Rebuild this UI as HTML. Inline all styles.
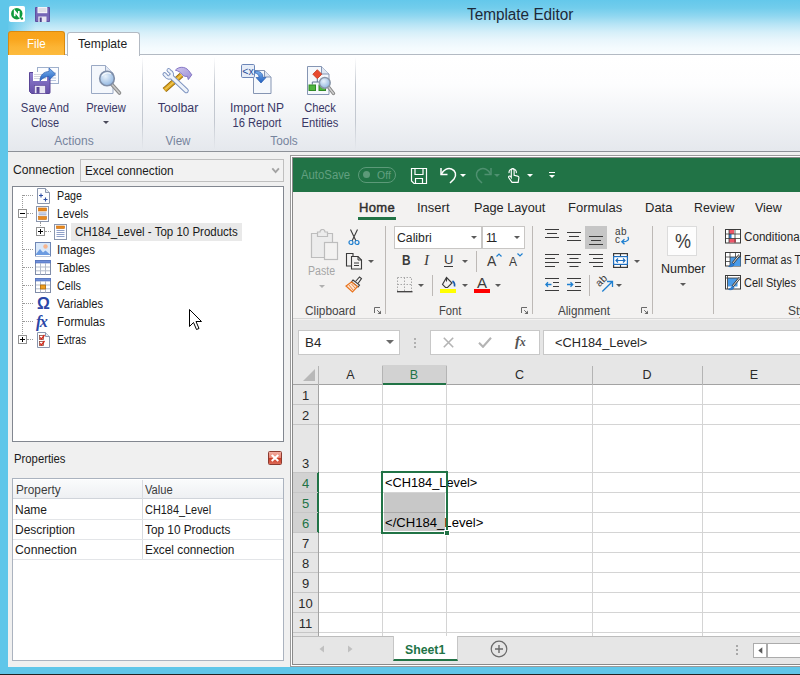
<!DOCTYPE html>
<html><head><meta charset="utf-8">
<style>
*{box-sizing:border-box;margin:0;padding:0}
html,body{width:800px;height:675px;overflow:hidden}
body{position:relative;background:#f0f0f0;font-family:"Liberation Sans",sans-serif;font-size:12px;color:#1e1e1e}
.a{position:absolute}
.t{position:absolute;white-space:nowrap;line-height:1}
.c{text-align:center}
/* window chrome */
#title{left:0;top:0;width:800px;height:55px;background:linear-gradient(#64c8eb 0,#72cdec 8px,#90d7f0 16px,#b6e4f5 24px,#d5eff9 32px,#e9f6fc 40px,#f4fbfe 48px,#f9fdff 55px)}
#lb{left:0;top:0;width:8px;height:675px;background:#5fc6e9}
#bb{left:0;top:667px;width:800px;height:8px;background:#5fc6e9;border-bottom:1px solid #222}
#ribbon{left:8px;top:54px;width:792px;height:98px;background:linear-gradient(#ffffff 0,#fdfdfe 30%,#f1f3f6 65%,#e5e8ed 100%);border-top:1px solid #b3bac3;border-bottom:1px solid #8d9198}
.rsep{width:1px;top:57px;height:93px;background:linear-gradient(rgba(180,186,196,0),#c3c8d0 30%,#c3c8d0 70%,rgba(180,186,196,0))}
.rt{color:#3a3866;font-size:12px}
.rg{color:#76849d;font-size:12px}
/* left panel */
.dd{left:80px;top:159px;width:204px;height:23px;background:#f2f2f2;border:1px solid #bfbfbf}
#tree{left:12px;top:186px;width:272px;height:256px;background:#fff;border:1px solid #828790}
#props{left:12px;top:478px;width:272px;height:183px;background:#fff;border:1px solid #abb3bf}
.ti{font-size:12px;color:#1a1a1a}
/* excel */
#xl{left:290px;top:155px;width:520px;height:512px;background:#fff;border:1px solid #9a9a9a}
#xl2{left:292px;top:157px;width:520px;height:508px;border:1px solid #8a8a8a;background:#fff}
#xgreen{left:293px;top:158px;width:507px;height:34px;background:#217346}
#xrib{left:293px;top:192px;width:507px;height:128px;background:#f3f2f1}
#xfb{left:293px;top:320px;width:507px;height:45px;background:#e6e6e6}
#grid{left:293px;top:365px;width:507px;height:271px;background:#fff}
#tabs{left:293px;top:636px;width:507px;height:28px;background:#e6e6e6;border-top:1px solid #bdbdbd}
.gl{background:#d4d4d4}
.xt{color:#262626;font-size:13px}
.xs{color:#444;font-size:12px}
</style></head><body>
<div class="a" id="title"></div>
<div class="a" style="left:0;top:0;width:40px;height:55px;background:linear-gradient(90deg,#5fc6e9 0,#5fc6e9 7px,rgba(95,198,233,0.600) 16px,rgba(95,198,233,0) 36px)"></div>
<div class="a" id="ribbon"></div>
<div class="a" id="lb"></div>
<div class="a" id="bb"></div>

<!-- TITLE -->
<div class="t" id="ttl" style="left:467px;top:7px;font-size:16px;color:#1c2a3a;transform:scaleX(0.957);transform-origin:0 0">Template Editor</div>
<!-- app icon -->
<svg class="a" style="left:9px;top:6px" width="16" height="16" viewBox="0 0 16 16"><rect width="16" height="16" rx="1.800" fill="#fff"/><circle cx="7.800" cy="7.700" r="5.700" fill="#0d9a3c"/><path d="M5.700 10.300v-5.200l4.100 5.200v-5.200" stroke="#fff" stroke-width="1.700" fill="none"/><circle cx="12.900" cy="12.500" r="1.200" fill="#0d9a3c"/></svg>
<svg class="a" style="left:35px;top:7px" width="15" height="15" viewBox="0 0 15 15"><path d="M0.500 0.500h14v14h-14z" fill="#7566b6" stroke="#5f50a0"/><rect x="2.500" y="0" width="9.800" height="6.200" fill="#f3f3f8"/><path d="M3.500 2h7.800M3.500 4h7.800" stroke="#c0c0cc" stroke-width="0.800"/><rect x="3.300" y="9.500" width="8.200" height="5.500" fill="#e6e4f2"/><rect x="4.700" y="10.500" width="2" height="4.500" fill="#4a3e86"/></svg>

<!-- TABS -->
<div class="a" style="left:8px;top:31px;width:57px;height:24px;border-radius:3px 3px 0 0;background:linear-gradient(#f8a31a 0,#f9a51c 30%,#fcb434 65%,#fdbb3d 100%);border:1px solid #d98a10;border-bottom:none"></div>
<div class="t" id="tf" style="left:27px;top:37px;font-size:13px;color:#fff;transform:scaleX(0.893);transform-origin:0 0">File</div>
<div class="a" style="left:67px;top:32px;width:73px;height:24px;border-radius:3px 3px 0 0;background:#fff;border:1px solid #b3bac3;border-bottom:none"></div>
<div class="t" id="tt" style="left:78px;top:37px;font-size:13px;color:#1e1e1e;transform:scaleX(0.933);transform-origin:0 0">Template</div>

<!-- RIBBON CONTENT -->
<div class="a rsep" style="left:142px"></div>
<div class="a rsep" style="left:214px"></div>
<div class="a rsep" style="left:355px"></div>
<!-- save and close icon -->
<svg class="a" style="left:28px;top:64px" width="34" height="32" viewBox="0 0 34 32">
<defs><linearGradient id="fl" x1="0" y1="0" x2="0" y2="1"><stop offset="0" stop-color="#8f7fd0"/><stop offset="1" stop-color="#6650a8"/></linearGradient>
<linearGradient id="ar" x1="0" y1="0" x2="0" y2="1"><stop offset="0" stop-color="#7fb4ee"/><stop offset="1" stop-color="#1f5fc0"/></linearGradient></defs>
<rect x="9.5" y="3.5" width="21" height="16" fill="#fbfcff" stroke="#9fb0cc"/>
<path d="M20 9h8M20 11.500h8M20 14h8M20 16.500h8" stroke="#b9c6e0" stroke-width="1"/>
<path d="M1.500 8.500h20.500v20a1 1 0 0 1-1 1h-17.500l-2-2z" fill="url(#fl)" stroke="#5a4596"/>
<rect x="5" y="8" width="14" height="9" fill="#fdfdfd"/>
<path d="M6 10.500h12M6 12.500h12M6 14.500h12" stroke="#c9c9d6" stroke-width="0.800"/>
<rect x="6.500" y="21.500" width="11" height="8" fill="#e8e5f3" stroke="#5a4596" stroke-width="0.600"/>
<rect x="8.500" y="23" width="3" height="6.500" fill="#5b4899"/>
<path d="M12 17c0-6 4-9.500 9-9.500v-3.500l6.500 6-6.500 6v-3.500c-3.500 0-6.500 1.500-9 4.500z" fill="url(#ar)" stroke="#2a5db0" stroke-width="0.700"/>
</svg>
<!-- preview icon -->
<svg class="a" style="left:89px;top:63px" width="34" height="34" viewBox="0 0 34 34">
<defs><radialGradient id="gl1" cx="0.4" cy="0.35" r="0.7"><stop offset="0" stop-color="#e8f2fb"/><stop offset="1" stop-color="#8db3e0"/></radialGradient></defs>
<path d="M2.500 2.500h14l7.500 7.500v20.500h-21.500z" fill="#f4f7fc" stroke="#9aa9c4"/>
<path d="M16.500 2.500v7.500h7.500" fill="#dfe6f2" stroke="#9aa9c4"/>
<path d="M22.500 21l8 9" stroke="#8a8a8a" stroke-width="3.600" stroke-linecap="round"/>
<path d="M22.500 21l8 9" stroke="#c9c9c9" stroke-width="1.600" stroke-linecap="round"/>
<circle cx="18" cy="15.500" r="7.300" fill="url(#gl1)" stroke="#7f8ea8" stroke-width="1.600"/>
<path d="M13 13c2-3 6-4 9-2" stroke="#fff" stroke-width="1.200" fill="none" opacity="0.800"/>
</svg>
<!-- toolbar icon -->
<svg class="a" style="left:160px;top:64px" width="36" height="32" viewBox="0 0 36 32">
<defs><linearGradient id="hm" x1="0" y1="0" x2="1" y2="1"><stop offset="0" stop-color="#cfc6ee"/><stop offset="1" stop-color="#9d8fd6"/></linearGradient></defs>
<path d="M4.500 26l17-15" stroke="#8f6208" stroke-width="5.600" stroke-linecap="butt"/>
<path d="M4.500 26l17-15" stroke="#dca622" stroke-width="3.800" stroke-linecap="butt"/>
<path d="M5.300 25.300l16.500-14.500" stroke="#f0c85a" stroke-width="1.200"/>
<path d="M15.400 6.200C18.500 2.400 25 2.200 28.500 6.400L31.800 10.800L28.300 15.600L27.400 12.300C25.500 12.800 23.300 12 22 10.400C20.500 8.200 18 6.800 15.400 6.200Z" fill="url(#hm)" stroke="#7a6cc0" stroke-width="0.900"/>
<path d="M10.800 12.200l15.400 14.400" stroke="#7d93c0" stroke-width="5.200" stroke-linecap="round"/>
<path d="M8.62 6.18L9.96 7.53A3.1 3.1 0 1 1 5.93 11.56L4.58 10.22" fill="none" stroke="#7d93c0" stroke-width="4.200" stroke-linecap="round"/>
<path d="M10.800 12.200l15.400 14.400" stroke="#eef3fa" stroke-width="3.200" stroke-linecap="round"/>
<path d="M8.62 6.18L9.96 7.53A3.1 3.1 0 1 1 5.93 11.56L4.58 10.22" fill="none" stroke="#eef3fa" stroke-width="2.300" stroke-linecap="round"/>
</svg>
<!-- import np icon -->
<svg class="a" style="left:239px;top:62px" width="36" height="34" viewBox="0 0 36 34">
<path d="M14.500 8.500h11l6.500 6.500v16.500h-17.500z" fill="#f5f8fc" stroke="#8595b3"/>
<path d="M25.500 8.500v6.500h6.500" fill="#dfe6f2" stroke="#8595b3"/>
<rect x="2.500" y="2.500" width="13" height="13" rx="1.200" fill="#e6edf8" stroke="#6c86b8"/>
<text x="9" y="13" font-family="Liberation Sans" font-size="10.500" fill="#2d4f9a" text-anchor="middle">&lt;x</text>
<path d="M16 9c5.500 0 8 2.500 8 6.500h3l-5 5.500-5-5.500h3c0-2.500-1.200-4-4-4.500z" fill="url(#ar)" stroke="#2a5db0" stroke-width="0.700"/>
</svg>
<!-- check entities icon -->
<svg class="a" style="left:305px;top:64px" width="32" height="34" viewBox="0 0 32 34">
<path d="M2.500 2.500h14l7.500 7.500v20.500h-21.500z" fill="#f5f8fc" stroke="#8595b3"/>
<path d="M16.500 2.500v7.500h7.500" fill="#dfe6f2" stroke="#8595b3"/>
<path d="M12.300 14.500v3.500M7.300 20.500v-2.500h10v2.500" stroke="#5f7390" fill="none"/>
<path d="M12.300 5.700l4.500 4.500-4.500 4.500-4.500-4.500z" fill="#e8492e" stroke="#c03a20" stroke-width="0.800"/>
<rect x="4" y="21" width="6.500" height="5.500" fill="#4fb53f" stroke="#2f8a25"/>
<rect x="14" y="21" width="6.500" height="5.500" fill="#4fb53f" stroke="#2f8a25"/>
<path d="M23.500 23l5 6.500" stroke="#858585" stroke-width="3.400" stroke-linecap="round"/>
<path d="M23.500 23l5 6.500" stroke="#cfcfcf" stroke-width="1.400" stroke-linecap="round"/>
<circle cx="19.800" cy="18.800" r="5.400" fill="url(#gl1)" stroke="#8a96a8" stroke-width="1.500"/>
</svg>
<div class="t c rt" id="r1" style="left:5px;width:80px;top:102px;transform:scaleX(0.940);transform-origin:50% 0">Save And</div>
<div class="t c rt" id="r2" style="left:5px;width:80px;top:117px;transform:scaleX(0.913);transform-origin:50% 0">Close</div>
<div class="t c rt" id="r3" style="left:66px;width:80px;top:102px;transform:scaleX(0.930);transform-origin:50% 0">Preview</div>
<div class="a" style="left:103px;top:121px;width:0;height:0;border:3px solid transparent;border-top:3px solid #4a4a5a;border-bottom:none"></div>
<div class="t c rt" id="r4" style="left:138px;width:80px;top:102px;transform:scaleX(1.029);transform-origin:50% 0">Toolbar</div>
<div class="t c rt" id="r5" style="left:217px;width:80px;top:102px">Import NP</div>
<div class="t c rt" id="r6" style="left:217px;width:80px;top:117px;transform:scaleX(0.929);transform-origin:50% 0">16 Report</div>
<div class="t c rt" id="r7" style="left:280px;width:80px;top:102px;transform:scaleX(0.925);transform-origin:50% 0">Check</div>
<div class="t c rt" id="r8" style="left:280px;width:80px;top:117px;transform:scaleX(0.935);transform-origin:50% 0">Entities</div>
<div class="t c rg" id="g1" style="left:34px;width:80px;top:135px">Actions</div>
<div class="t c rg" id="g2" style="left:138px;width:80px;top:135px;transform:scaleX(0.968);transform-origin:50% 0">View</div>
<div class="t c rg" id="g3" style="left:244px;width:80px;top:135px;transform:scaleX(0.982);transform-origin:50% 0">Tools</div>

<!-- LEFT PANEL -->
<div class="t ti" id="lc" style="left:13px;top:164px;transform:scaleX(1.013);transform-origin:0 0">Connection</div>
<div class="a dd"></div>
<div class="t ti" id="ld" style="left:85px;top:165px;transform:scaleX(0.977);transform-origin:0 0">Excel connection</div>
<svg class="a" style="left:271px;top:167px" width="9" height="7" viewBox="0 0 9 7"><path d="M1.300 1.300l3.300 3.900 3.300-3.900" stroke="#a3a3a3" stroke-width="1.800" fill="none"/></svg>
<div class="a" id="tree"></div>
<!-- tree lines -->
<div class="a" style="left:22px;top:195px;width:1px;height:145px;border-left:1px dotted #9a9a9a"></div>
<div class="a" style="left:23px;top:195px;width:10px;height:1px;border-top:1px dotted #9a9a9a"></div>
<div class="a" style="left:27px;top:213px;width:6px;height:1px;border-top:1px dotted #9a9a9a"></div>
<div class="a" style="left:23px;top:249px;width:10px;height:1px;border-top:1px dotted #9a9a9a"></div>
<div class="a" style="left:23px;top:267px;width:10px;height:1px;border-top:1px dotted #9a9a9a"></div>
<div class="a" style="left:23px;top:285px;width:10px;height:1px;border-top:1px dotted #9a9a9a"></div>
<div class="a" style="left:23px;top:303px;width:10px;height:1px;border-top:1px dotted #9a9a9a"></div>
<div class="a" style="left:23px;top:321px;width:10px;height:1px;border-top:1px dotted #9a9a9a"></div>
<div class="a" style="left:27px;top:339px;width:6px;height:1px;border-top:1px dotted #9a9a9a"></div>
<div class="a" style="left:40px;top:222px;width:1px;height:6px;border-left:1px dotted #9a9a9a"></div>
<div class="a" style="left:45px;top:231px;width:6px;height:1px;border-top:1px dotted #9a9a9a"></div>
<!-- expand boxes -->
<div class="a" style="left:18px;top:209px;width:9px;height:9px;background:#fff;border:1px solid #919191"></div><div class="a" style="left:20px;top:213px;width:5px;height:1px;background:#000"></div>
<div class="a" style="left:36px;top:227px;width:9px;height:9px;background:#fff;border:1px solid #919191"></div><div class="a" style="left:38px;top:231px;width:5px;height:1px;background:#000"></div><div class="a" style="left:40px;top:229px;width:1px;height:5px;background:#000"></div>
<div class="a" style="left:18px;top:335px;width:9px;height:9px;background:#fff;border:1px solid #919191"></div><div class="a" style="left:20px;top:339px;width:5px;height:1px;background:#000"></div><div class="a" style="left:22px;top:337px;width:1px;height:5px;background:#000"></div>
<!-- selected -->
<div class="a" style="left:71px;top:223px;width:171px;height:18px;background:#e9e9e9"></div>
<!-- tree icons -->
<svg class="a" style="left:36px;top:188px" width="15" height="16" viewBox="0 0 15 16"><path d="M1.500 0.500h8l4 4v11h-12z" fill="#fcfdff" stroke="#8a96ad"/><path d="M9.500 0.500v4h4" fill="#e4e9f2" stroke="#8a96ad"/><path d="M3 7.500h4M5 5.500v4M7.500 11.500h4M9.500 9.500v4" stroke="#2d4ea3" stroke-width="1.100"/></svg>
<svg class="a" style="left:36px;top:206px" width="14" height="16" viewBox="0 0 14 16"><rect x="0.500" y="0.500" width="12" height="15" fill="#fdfdff" stroke="#8a96ad"/><rect x="2.500" y="2" width="8" height="3" fill="#e88a1e" stroke="#c76a0a" stroke-width="0.600"/><rect x="2.500" y="10.500" width="8" height="3" fill="#e88a1e" stroke="#c76a0a" stroke-width="0.600"/><path d="M2.500 7h8M2.500 8.800h8" stroke="#8fa0c8" stroke-width="1"/></svg>
<svg class="a" style="left:54px;top:224px" width="14" height="16" viewBox="0 0 14 16"><rect x="0.500" y="0.500" width="12" height="15" fill="#fdfdff" stroke="#8a96ad"/><rect x="2.500" y="2" width="8" height="2.500" fill="#e88a1e" stroke="#c76a0a" stroke-width="0.600"/><path d="M2.500 6.500h8M2.500 8.500h8M2.500 10.500h8M2.500 12.500h8" stroke="#8fa0c8" stroke-width="1"/></svg>
<svg class="a" style="left:35px;top:242px" width="16" height="15" viewBox="0 0 16 15"><rect x="0.500" y="0.500" width="15" height="13.500" fill="#d9e8fa" stroke="#6f86b4"/><circle cx="10.500" cy="4.500" r="2.200" fill="#f6b58e"/><path d="M1 12l4-5 3 3.500 2.500-2 4.500 4v1h-14z" fill="#6c9be0"/><path d="M1 13.500h14" stroke="#fff"/></svg>
<svg class="a" style="left:35px;top:260px" width="16" height="15" viewBox="0 0 16 15"><rect x="0.500" y="0.500" width="15" height="14" fill="#fff" stroke="#7f8ca8"/><rect x="0.500" y="0.500" width="15" height="2.500" fill="#6f8fd8" stroke="#4a6bc0" stroke-width="0.600"/><path d="M5.500 3v11.500M10.500 3v11.500M1 7h14M1 10.800h14" stroke="#b4bccb" stroke-width="1"/></svg>
<svg class="a" style="left:35px;top:278px" width="16" height="15" viewBox="0 0 16 15"><rect x="0.500" y="0.500" width="15" height="14" fill="#fff" stroke="#7f8ca8"/><rect x="0.500" y="0.500" width="15" height="2.500" fill="#6f8fd8" stroke="#4a6bc0" stroke-width="0.600"/><path d="M5.500 3v11.500M10.500 3v11.500M1 7h14M1 10.800h14" stroke="#b4bccb" stroke-width="1"/><rect x="5.500" y="7" width="5" height="4" fill="#f0a020" stroke="#b06a08" stroke-width="0.800"/></svg>
<div class="t" style="left:37px;top:296px;font-size:16px;font-weight:bold;color:#2b46a6;font-family:'Liberation Sans'">&#937;</div>
<div class="t" style="left:36px;top:314px;font-size:16px;font-style:italic;font-weight:bold;color:#2b46a6;font-family:'Liberation Serif';letter-spacing:-1.500px">fx</div>
<svg class="a" style="left:36px;top:332px" width="15" height="16" viewBox="0 0 15 16"><path d="M1.500 0.500h8l4 4v11h-12z" fill="#fcfdff" stroke="#8a96ad"/><path d="M9.500 0.500v4h4" fill="#e4e9f2" stroke="#8a96ad"/><rect x="3.500" y="3.500" width="4" height="4" fill="#fff" stroke="#8a4a3a" stroke-width="0.800"/><rect x="3.500" y="9.500" width="4" height="4" fill="#fff" stroke="#8a4a3a" stroke-width="0.800"/><path d="M4 5.500l1.500 1.500 3-4M4 11.500l1.500 1.500 3-4" stroke="#d8281a" stroke-width="1.300" fill="none"/></svg>
<!-- tree text -->
<div class="t ti" id="t1" style="left:57px;top:190px;transform:scaleX(0.892);transform-origin:0 0">Page</div>
<div class="t ti" id="t2" style="left:57px;top:208px;transform:scaleX(0.902);transform-origin:0 0">Levels</div>
<div class="t ti" id="t3" style="left:75px;top:226px;transform:scaleX(0.958);transform-origin:0 0">CH184_Level - Top 10 Products</div>
<div class="t ti" id="t4" style="left:57px;top:244px;transform:scaleX(0.965);transform-origin:0 0">Images</div>
<div class="t ti" id="t5" style="left:57px;top:262px;transform:scaleX(0.951);transform-origin:0 0">Tables</div>
<div class="t ti" id="t6" style="left:57px;top:280px;transform:scaleX(0.900);transform-origin:0 0">Cells</div>
<div class="t ti" id="t7" style="left:57px;top:298px;transform:scaleX(0.936);transform-origin:0 0">Variables</div>
<div class="t ti" id="t8" style="left:57px;top:316px;transform:scaleX(0.960);transform-origin:0 0">Formulas</div>
<div class="t ti" id="t9" style="left:57px;top:334px;transform:scaleX(0.853);transform-origin:0 0">Extras</div>
<!-- cursor -->
<svg class="a" style="left:188px;top:308px" width="14" height="23" viewBox="0 0 14 23"><path d="M1.500 1.500v17l4-4 3 7 2.500-1-3-7h5.500z" fill="#fff" stroke="#000" stroke-width="1"/></svg>
<!-- properties -->
<div class="t ti" id="pp" style="left:14px;top:453px;transform:scaleX(0.942);transform-origin:0 0">Properties</div>
<div class="a" style="left:268px;top:451px;width:14px;height:14px;border-radius:1.500px;background:linear-gradient(#f3ada0 0,#e88474 48%,#cc3a22 52%,#dc6a58 100%);border:1px solid #8c3b30"></div>
<svg class="a" style="left:268px;top:451px" width="14" height="14" viewBox="0 0 14 14"><path d="M3.700 4l6.600 6M10.300 4l-6.600 6" stroke="#fff" stroke-width="2"/></svg>
<div class="a" id="props"></div>
<div class="a" style="left:13px;top:480px;width:270px;height:19px;background:linear-gradient(#fafbfc,#eef0f3);border-bottom:1px solid #d0d4da"></div>
<div class="a" style="left:142px;top:480px;width:1px;height:80px;background:#d9dce1"></div>
<div class="a" style="left:13px;top:519px;width:270px;height:1px;background:#e3e5e8"></div>
<div class="a" style="left:13px;top:539px;width:270px;height:1px;background:#e3e5e8"></div>
<div class="a" style="left:13px;top:559px;width:270px;height:1px;background:#e3e5e8"></div>
<div class="t ti" id="p1" style="left:16px;top:484px;color:#3c3c3c;transform:scaleX(0.983);transform-origin:0 0">Property</div>
<div class="t ti" id="p2" style="left:145px;top:484px;color:#3c3c3c;transform:scaleX(0.929);transform-origin:0 0">Value</div>
<div class="t ti" id="p3" style="left:15px;top:504px">Name</div>
<div class="t ti" id="p4" style="left:145px;top:504px;transform:scaleX(0.909);transform-origin:0 0">CH184_Level</div>
<div class="t ti" id="p5" style="left:15px;top:524px">Description</div>
<div class="t ti" id="p6" style="left:145px;top:524px;transform:scaleX(0.984);transform-origin:0 0">Top 10 Products</div>
<div class="t ti" id="p7" style="left:15px;top:544px;transform:scaleX(1.019);transform-origin:0 0">Connection</div>
<div class="t ti" id="p8" style="left:145px;top:544px;transform:scaleX(0.986);transform-origin:0 0">Excel connection</div>

<!-- EXCEL FRAME -->
<div class="a" id="xl"></div>
<div class="a" id="xl2"></div>
<div class="a" id="xgreen"></div>
<div class="a" id="xrib"></div>
<div class="a" id="xfb"></div>
<div class="a" id="grid"></div>
<div class="a" id="tabs"></div>
<!-- green bar -->
<div class="t" id="x0" style="left:301px;top:169px;font-size:12px;color:#62a080;transform:scaleX(0.945);transform-origin:0 0">AutoSave</div>
<div class="a" style="left:358px;top:166.500px;width:38px;height:16px;border:1px solid #5c9a79;border-radius:8px"></div>
<div class="a" style="left:363px;top:171px;width:7px;height:7px;border-radius:4px;background:#5c9a79"></div>
<div class="t" style="left:377px;top:170px;font-size:10.500px;color:#62a080">Off</div>
<svg class="a" style="left:410px;top:167px" width="18" height="18" viewBox="0 0 18 18"><path d="M1.500 1.500h15v15h-12.500l-2.500-2.500z" fill="none" stroke="#fff" stroke-width="1.200"/><path d="M5 1.500v6h8v-6M5.500 16.500v-5h7v5" fill="none" stroke="#fff" stroke-width="1.200"/></svg>
<svg class="a" style="left:439px;top:165px" width="20" height="20" viewBox="0 0 20 20"><path d="M2 3v6.500h6.500" fill="none" stroke="#fff" stroke-width="1.500"/><path d="M2.500 9c2-4 6-6.500 10-5s5.500 6 2.500 10l-4 4" fill="none" stroke="#fff" stroke-width="1.500"/></svg>
<div class="a" style="left:460px;top:174px;border:3px solid transparent;border-top:3px solid #fff;border-bottom:none"></div>
<svg class="a" style="left:474px;top:165px" width="20" height="20" viewBox="0 0 20 20"><path d="M17 3v6.500h-6.500" fill="none" stroke="#4f9070" stroke-width="1.500"/><path d="M16.500 9c-2-4-6-6.500-10-5s-5.500 6-2.500 10l4 4" fill="none" stroke="#4f9070" stroke-width="1.500"/></svg>
<div class="a" style="left:494px;top:174px;border:3px solid transparent;border-top:3px solid #4f9070;border-bottom:none"></div>
<svg class="a" style="left:506px;top:167px" width="15" height="18.500" viewBox="0 0 17 21"><path d="M6 12v-8.500a1.600 1.600 0 0 1 3.200 0v6l4 0.800a1.800 1.800 0 0 1 1.400 2l-0.800 5.200h-7l-3.800-5.500a1.300 1.300 0 0 1 2-1.500z" fill="none" stroke="#fff" stroke-width="1.300"/><path d="M3.500 7a4.200 4.200 0 1 1 8.200 0" fill="none" stroke="#fff" stroke-width="1.200"/></svg>
<div class="a" style="left:527px;top:174px;border:3px solid transparent;border-top:3px solid #fff;border-bottom:none"></div>
<div class="a" style="left:549px;top:172px;width:6px;height:1px;background:#fff"></div>
<div class="a" style="left:549px;top:175px;border:3px solid transparent;border-top:3px solid #fff;border-bottom:none"></div>
<!-- tabs -->
<div class="t" id="xh1" style="left:359px;top:201px;font-size:13px;color:#2f2f2f;-webkit-text-stroke:0.450px #2f2f2f;letter-spacing:0.350px">Home</div>
<div class="a" style="left:358px;top:217px;width:38px;height:3px;background:#217346"></div>
<div class="t xt" id="xh2" style="left:417px;top:201px;font-size:13px">Insert</div>
<div class="t xt" id="xh3" style="left:474px;top:201px;font-size:13px;transform:scaleX(0.977);transform-origin:0 0">Page Layout</div>
<div class="t xt" id="xh4" style="left:568px;top:201px;font-size:13px">Formulas</div>
<div class="t xt" id="xh5" style="left:645px;top:201px;font-size:13px">Data</div>
<div class="t xt" id="xh6" style="left:694px;top:201px;font-size:13px;transform:scaleX(0.947);transform-origin:0 0">Review</div>
<div class="t xt" id="xh7" style="left:755px;top:201px;font-size:13px;transform:scaleX(0.960);transform-origin:0 0">View</div>
<!-- EXCEL RIBBON -->
<div class="a" style="left:385px;top:226px;width:1px;height:88px;background:#bdb9b6"></div><div class="a" style="left:532px;top:226px;width:1px;height:88px;background:#bdb9b6"></div><div class="a" style="left:652px;top:226px;width:1px;height:88px;background:#bdb9b6"></div><div class="a" style="left:713px;top:226px;width:1px;height:88px;background:#bdb9b6"></div><div class="a" style="left:476px;top:251px;width:1px;height:21px;background:#bdb9b6"></div><div class="a" style="left:432px;top:275px;width:1px;height:21px;background:#bdb9b6"></div><div class="a" style="left:589px;top:275px;width:1px;height:21px;background:#bdb9b6"></div><svg class="a" style="left:310px;top:229px" width="29" height="32" viewBox="0 0 29 32"><path d="M1.500 4.500h6v-1.500h2.500a2.500 2.500 0 0 1 5 0h2.500v1.500h5v24h-21z" fill="#ececec" stroke="#bdbdbd" stroke-width="1.200"/><path d="M7.500 4.500v3h10v-3" fill="none" stroke="#bdbdbd" stroke-width="1.200"/><rect x="14.500" y="13.500" width="13" height="17" fill="#f3f2f1" stroke="#bdbdbd" stroke-width="1.200"/></svg>
<div class="t" id="xp" style="left:308px;top:265px;font-size:12px;color:#a6a6a6;transform:scaleX(0.880);transform-origin:0 0">Paste</div>
<div class="a" style="left:319px;top:285px;border:3px solid transparent;border-top:3px solid #b0b0b0;border-bottom:none"></div><svg class="a" style="left:347px;top:229px" width="14" height="17" viewBox="0 0 14 17"><path d="M3.500 0.500l5.500 11.500M10.500 0.500l-5.500 11.500" stroke="#3b3b3b" stroke-width="1.100" fill="none"/><circle cx="4" cy="13.500" r="2" fill="none" stroke="#1e7fd0" stroke-width="1.200"/><circle cx="10" cy="13.500" r="2" fill="none" stroke="#1e7fd0" stroke-width="1.200"/></svg>
<svg class="a" style="left:345px;top:252px" width="19" height="18" viewBox="0 0 19 18"><path d="M1.500 1.500h6.500v12.500h-6.500z" fill="#f3f2f1" stroke="#3b3b3b" stroke-width="1.100"/><path d="M6.500 4.500h6.500l3.500 3.500v9h-10z" fill="#f3f2f1" stroke="#3b3b3b" stroke-width="1.100"/><path d="M13 4.500v3.500h3.500M9 11h5M9 13.500h5" fill="none" stroke="#3b3b3b" stroke-width="1"/></svg>
<div class="a" style="left:368px;top:260px;border:3px solid transparent;border-top:3px solid #5a5a5a;border-bottom:none"></div><svg class="a" style="left:345px;top:276px" width="18" height="17" viewBox="0 0 18 17"><path d="M10.500 5.500l4-4.500 2 1.500-3.500 5" fill="#f3f2f1" stroke="#3b3b3b" stroke-width="1.100"/><path d="M8 4l6.500 5-1.500 2-6.500-5z" fill="#f3f2f1" stroke="#3b3b3b" stroke-width="1.100"/><path d="M6.500 6l6 4.500-5 5.500-6.500-6z" fill="#fbe3d0" stroke="#e8741e" stroke-width="1.200"/><path d="M4 9l4 5M6.500 8l3.500 4" stroke="#e8741e" stroke-width="0.800"/></svg>
<div class="t xs" id="xl1" style="left:305px;top:305px;font-size:12px;transform:scaleX(0.986);transform-origin:0 0">Clipboard</div>
<svg class="a" style="left:374px;top:307px" width="8" height="8" viewBox="0 0 8 8"><path d="M0.500 6v-5.500h5.500" fill="none" stroke="#6a6a6a" stroke-width="1"/><path d="M3.200 3.200l3 3" stroke="#6a6a6a" stroke-width="1"/><path d="M7 3.500v3.500h-3.500z" fill="#6a6a6a"/></svg><div class="a" style="left:394px;top:226px;width:88px;height:23px;background:#fff;border:1px solid #c8c6c4"></div>
<div class="a" style="left:482px;top:226px;width:43px;height:23px;background:#fff;border:1px solid #c8c6c4"></div>
<div class="t xt" id="xf1" style="left:397px;top:232px;font-size:12px;transform:scaleX(1.020);transform-origin:0 0">Calibri</div>
<div class="t xt" id="xf2" style="left:486px;top:232px;font-size:12px;letter-spacing:-1.300px">11</div>
<div class="a" style="left:471px;top:236px;border:3px solid transparent;border-top:3px solid #5a5a5a;border-bottom:none"></div><div class="a" style="left:514px;top:236px;border:3px solid transparent;border-top:3px solid #5a5a5a;border-bottom:none"></div><div class="t" style="left:402px;top:253px;font-size:14px;font-weight:bold;color:#3b3b3b;transform:scaleX(0.850);transform-origin:0 0">B</div>
<div class="t" style="left:424px;top:253px;font-size:15px;font-style:italic;color:#3b3b3b;font-family:'Liberation Serif'">I</div>
<div class="t" style="left:444px;top:253px;font-size:13px;color:#3b3b3b;border-bottom:1px solid #3b3b3b;padding-bottom:0px;line-height:13px">U</div>
<div class="a" style="left:462px;top:260px;border:3px solid transparent;border-top:3px solid #5a5a5a;border-bottom:none"></div><div class="t" style="left:487px;top:254px;font-size:14px;color:#3b3b3b">A</div>
<svg class="a" style="left:496px;top:253px" width="6" height="4" viewBox="0 0 6 4"><path d="M0.500 3.500l2.500-2.500 2.500 2.500" fill="none" stroke="#1e7fd0" stroke-width="1.200"/></svg>
<div class="t" style="left:509px;top:256px;font-size:12px;color:#3b3b3b">A</div>
<svg class="a" style="left:517px;top:253px" width="6" height="4" viewBox="0 0 6 4"><path d="M0.500 0.500l2.500 2.500 2.500-2.500" fill="none" stroke="#1e7fd0" stroke-width="1.200"/></svg>
<svg class="a" style="left:397px;top:277px" width="16" height="16" viewBox="0 0 16 16"><path d="M0.500 0.500h14v14M0.500 0.500v14M7.500 0.500v14M0.500 7.500h14" fill="none" stroke="#a8a8a8" stroke-width="1" stroke-dasharray="1.500 1.500"/><path d="M0 14.700h15.500" stroke="#3b3b3b" stroke-width="1.300"/></svg>
<div class="a" style="left:418px;top:284px;border:3px solid transparent;border-top:3px solid #5a5a5a;border-bottom:none"></div><svg class="a" style="left:441px;top:276px" width="16" height="13" viewBox="0 0 16 13"><path d="M5.500 1.500l5.500 5.500-4.500 4.500h-2l-3-3z" fill="#f3f2f1" stroke="#3b3b3b" stroke-width="1.100"/><path d="M5.500 1.500v4" stroke="#3b3b3b" stroke-width="1.100"/><path d="M11.500 5c1.500 1 2.500 3 2 5.500" fill="none" stroke="#1e5fb0" stroke-width="1.600"/></svg>
<div class="a" style="left:440px;top:289px;width:16px;height:4px;background:#ffff00"></div>
<div class="a" style="left:462px;top:284px;border:3px solid transparent;border-top:3px solid #5a5a5a;border-bottom:none"></div><div class="t" style="left:477px;top:275px;font-size:15px;color:#3b3b3b">A</div>
<div class="a" style="left:474px;top:289px;width:16px;height:4px;background:#fe0000"></div>
<div class="a" style="left:495px;top:284px;border:3px solid transparent;border-top:3px solid #5a5a5a;border-bottom:none"></div><div class="t xs" id="xl2t" style="left:439px;top:305px;font-size:12px;transform:scaleX(0.932);transform-origin:0 0">Font</div>
<svg class="a" style="left:521px;top:307px" width="8" height="8" viewBox="0 0 8 8"><path d="M0.500 6v-5.500h5.500" fill="none" stroke="#6a6a6a" stroke-width="1"/><path d="M3.200 3.200l3 3" stroke="#6a6a6a" stroke-width="1"/><path d="M7 3.500v3.500h-3.500z" fill="#6a6a6a"/></svg><div class="a" style="left:585px;top:226px;width:22px;height:23px;background:#c6c6c6"></div>
<svg class="a" style="left:545px;top:229px" width="14" height="9" viewBox="0 0 14 9"><path d="M0 0.5h14M2 4.5h10M0 8.5h14" stroke="#3b3b3b" stroke-width="1.200"/></svg><svg class="a" style="left:567px;top:232px" width="14" height="9" viewBox="0 0 14 9"><path d="M0 0.5h14M2 4.5h10M0 8.5h14" stroke="#3b3b3b" stroke-width="1.200"/></svg><svg class="a" style="left:589px;top:236px" width="14" height="9" viewBox="0 0 14 9"><path d="M0 0.5h14M2 4.5h10M0 8.5h14" stroke="#3b3b3b" stroke-width="1.200"/></svg><svg class="a" style="left:545px;top:254px" width="14" height="13" viewBox="0 0 14 13"><path d="M0 0.5h14M0 4.5h10M0 8.5h14M0 12.5h10" stroke="#3b3b3b" stroke-width="1.200"/></svg><svg class="a" style="left:567px;top:254px" width="14" height="13" viewBox="0 0 14 13"><path d="M0 0.5h14M2.5 4.5h9M0 8.5h14M2.5 12.5h9" stroke="#3b3b3b" stroke-width="1.200"/></svg><svg class="a" style="left:589px;top:254px" width="14" height="13" viewBox="0 0 14 13"><path d="M0 0.5h14M4 4.5h10M0 8.5h14M4 12.5h10" stroke="#3b3b3b" stroke-width="1.200"/></svg>
<div class="t" style="left:615px;top:228px;font-size:10px;color:#3b3b3b;line-height:8px;letter-spacing:0.500px">ab<br>c</div>
<svg class="a" style="left:620px;top:236px" width="10" height="9" viewBox="0 0 10 9"><path d="M7.800 0.800c1.800 2.800 0 5-5.500 5M4.500 3.300l-2.700 2.500 2.700 2.500" fill="none" stroke="#1e7fd0" stroke-width="1.300"/></svg>
<svg class="a" style="left:613px;top:253px" width="16" height="15" viewBox="0 0 16 15"><rect x="0.600" y="0.600" width="13.800" height="13.800" fill="#fff" stroke="#3b3b3b" stroke-width="1.200"/><path d="M7.500 0.500v3M7.500 11.500v3" stroke="#3b3b3b" stroke-width="1.100"/><rect x="0.600" y="3.600" width="13.800" height="7.800" fill="#fff" stroke="#1e6fc0" stroke-width="1.200"/><path d="M3 7.500h9M5 5.500l-2 2 2 2M10 5.500l2 2-2 2" fill="none" stroke="#1e6fc0" stroke-width="1.200"/></svg>
<div class="a" style="left:634px;top:260px;border:3px solid transparent;border-top:3px solid #5a5a5a;border-bottom:none"></div><svg class="a" style="left:545px;top:278px" width="14" height="13" viewBox="0 0 14 13"><path d="M0 0.500h14M8 4.500h6M8 8.500h6M0 12.500h14" stroke="#3b3b3b" stroke-width="1.200"/><path d="M0.800 6.500h5.700M3 4.300l-2.200 2.200 2.200 2.200" fill="none" stroke="#1e7fd0" stroke-width="1.300"/></svg>
<svg class="a" style="left:567px;top:278px" width="14" height="13" viewBox="0 0 14 13"><path d="M0 0.500h14M8 4.500h6M8 8.500h6M0 12.500h14" stroke="#3b3b3b" stroke-width="1.200"/><path d="M0 6.500h5.700M3.500 4.300l2.200 2.200-2.200 2.200" fill="none" stroke="#1e7fd0" stroke-width="1.300"/></svg>
<svg class="a" style="left:596px;top:275px" width="18" height="18" viewBox="0 0 18 18"><text x="0" y="0" transform="translate(3.600 12.200) rotate(-45)" font-family="Liberation Sans" font-size="10.500" fill="#3b3b3b">ab</text><path d="M6.300 16.500l10.200-10M11 6.500h5.500v5.500" fill="none" stroke="#1e7fd0" stroke-width="1.300"/></svg>
<div class="a" style="left:616px;top:284px;border:3px solid transparent;border-top:3px solid #5a5a5a;border-bottom:none"></div><div class="t xs" id="xl3" style="left:558px;top:305px;font-size:12px;transform:scaleX(0.972);transform-origin:0 0">Alignment</div>
<svg class="a" style="left:641px;top:307px" width="8" height="8" viewBox="0 0 8 8"><path d="M0.500 6v-5.500h5.500" fill="none" stroke="#6a6a6a" stroke-width="1"/><path d="M3.200 3.200l3 3" stroke="#6a6a6a" stroke-width="1"/><path d="M7 3.500v3.500h-3.500z" fill="#6a6a6a"/></svg><div class="a" style="left:667px;top:226px;width:30px;height:30px;background:#fdfdfd;border:1px solid #dcdcdc"></div>
<div class="t" style="left:675px;top:231px;font-size:20px;color:#3b3b3b;transform:scaleX(0.900);transform-origin:0 0">%</div>
<div class="t xt" id="xn" style="left:661px;top:263px;font-size:12.5px">Number</div>
<div class="a" style="left:680px;top:283px;border:3px solid transparent;border-top:3px solid #5a5a5a;border-bottom:none"></div><svg class="a" style="left:725px;top:229px" width="17" height="15" viewBox="0 0 17 15"><rect x="0.500" y="0.500" width="15" height="13.500" fill="#fff" stroke="#3b3b3b" stroke-width="1"/><rect x="4" y="1" width="5" height="4" fill="#f0566a"/><rect x="4" y="5" width="2.500" height="4.500" fill="#2d7fd6"/><rect x="4" y="9.500" width="7" height="4" fill="#f0566a"/><path d="M4 0.500v13.500M10 0.500v13.500M0.500 5h15M0.500 9.500h15" stroke="#3b3b3b" stroke-width="0.800"/></svg>
<svg class="a" style="left:725px;top:252px" width="17" height="16" viewBox="0 0 17 16"><rect x="0.500" y="0.500" width="15" height="13.500" fill="#fff" stroke="#3b3b3b" stroke-width="1"/><rect x="5" y="5" width="10.500" height="9" fill="#4a9be8"/><path d="M5 0.500v13.500M10.500 0.500v4.500M0.500 5h15M0.500 9.500h4.500" stroke="#3b3b3b" stroke-width="0.800"/><path d="M14.500 3l-7 8.500" stroke="#3b3b3b" stroke-width="2.400"/><path d="M14.500 3l-7 8.500" stroke="#e8e8e8" stroke-width="1"/><path d="M7.500 11c-1 0.500-1.500 2.500-4 3.500 2.500 0.800 5 0 5.500-2z" fill="#2d7fd6" stroke="#1e5fa8" stroke-width="0.500"/></svg>
<svg class="a" style="left:725px;top:275px" width="17" height="16" viewBox="0 0 17 16"><rect x="0.500" y="0.500" width="15" height="13.500" fill="#fff" stroke="#3b3b3b" stroke-width="1"/><rect x="2.500" y="3" width="10" height="8.500" fill="#4a9be8"/><path d="M0.500 3h15M2.500 0.500v13.500" stroke="#3b3b3b" stroke-width="0.800"/><path d="M14.500 3l-7 8.500" stroke="#3b3b3b" stroke-width="2.400"/><path d="M14.500 3l-7 8.500" stroke="#e8e8e8" stroke-width="1"/><path d="M7.500 11c-1 0.500-1.500 2.500-4 3.500 2.500 0.800 5 0 5.500-2z" fill="#2d7fd6" stroke="#1e5fa8" stroke-width="0.500"/></svg>
<div class="t xt" id="xs1" style="left:744px;top:231px;font-size:12px;transform:scaleX(0.970);transform-origin:0 0">Conditional</div>
<div class="t xt" id="xs2" style="left:744px;top:254px;font-size:12px;transform:scaleX(0.885);transform-origin:0 0">Format as Table</div>
<div class="t xt" id="xs3" style="left:744px;top:277px;font-size:12px;transform:scaleX(0.917);transform-origin:0 0">Cell Styles</div>
<div class="t xs" id="xl4" style="left:788px;top:305px;font-size:12px">Styles</div>
<!-- FORMULA BAR -->
<div class="a" style="left:293px;top:318px;width:507px;height:1px;background:#d6d6d6"></div>
<div class="a" style="left:298px;top:330px;width:102px;height:25px;background:#fff;border:1px solid #c8c8c8"></div>
<div class="t xt" id="fb1" style="left:305px;top:337px;font-size:12.5px;transform:scaleX(1.067);transform-origin:0 0">B4</div>
<div class="a" style="left:385.500px;top:339.500px;border:4px solid transparent;border-top:4px solid #6a6a6a;border-bottom:none"></div>
<div class="a" style="left:414px;top:338px;width:2px;height:2px;background:#b0b0b0"></div>
<div class="a" style="left:414px;top:342px;width:2px;height:2px;background:#b0b0b0"></div>
<div class="a" style="left:414px;top:346px;width:2px;height:2px;background:#b0b0b0"></div>
<div class="a" style="left:430px;top:330px;width:110px;height:25px;background:#fff;border:1px solid #c8c8c8"></div>
<svg class="a" style="left:443px;top:337px" width="11" height="11" viewBox="0 0 11 11"><path d="M0.800 0.800l9.400 9.400M10.200 0.800l-9.400 9.400" stroke="#b4b4b4" stroke-width="1.600"/></svg>
<svg class="a" style="left:478px;top:337px" width="14" height="11" viewBox="0 0 14 11"><path d="M1 5.800l4 4 8-9" fill="none" stroke="#b4b4b4" stroke-width="2.100"/></svg>
<div class="t" style="left:515px;top:334px;font-size:15px;font-style:italic;font-weight:bold;color:#555;font-family:'Liberation Serif';letter-spacing:-0.300px">f<span style="font-size:12px">x</span></div>
<div class="a" style="left:543px;top:330px;width:270px;height:25px;background:#fff;border:1px solid #c8c8c8"></div>
<div class="t xt" id="fb2" style="left:555px;top:337px;font-size:12.5px;transform:scaleX(1.022);transform-origin:0 0">&lt;CH184_Level&gt;</div>
<!-- GRID -->
<div class="a" style="left:293px;top:365px;width:507px;height:20px;background:#e6e6e6;border-bottom:1px solid #a3a3a3"></div>
<div class="a" style="left:293px;top:385px;width:26px;height:251px;background:#e6e6e6;border-right:1px solid #a3a3a3"></div>
<svg class="a" style="left:302px;top:368px" width="14" height="14" viewBox="0 0 14 14"><path d="M13 1v12h-12z" fill="#b8b8b8"/></svg>
<div class="a" style="left:382px;top:365px;width:65px;height:20px;background:#d2d2d2;border-bottom:2px solid #217346"></div>
<div class="a" style="left:293px;top:472px;width:26px;height:61px;background:#d2d2d2;border-right:2px solid #217346"></div>
<div class="a" style="left:382px;top:366px;width:1px;height:19px;background:#b4b4b4"></div>
<div class="a gl" style="left:382px;top:385px;width:1px;height:251px"></div>
<div class="a" style="left:446px;top:366px;width:1px;height:19px;background:#b4b4b4"></div>
<div class="a gl" style="left:446px;top:385px;width:1px;height:251px"></div>
<div class="a" style="left:592px;top:366px;width:1px;height:19px;background:#b4b4b4"></div>
<div class="a gl" style="left:592px;top:385px;width:1px;height:251px"></div>
<div class="a" style="left:702px;top:366px;width:1px;height:19px;background:#b4b4b4"></div>
<div class="a gl" style="left:702px;top:385px;width:1px;height:251px"></div>
<div class="a gl" style="left:319px;top:404px;width:481px;height:1px"></div>
<div class="a" style="left:293px;top:404px;width:25px;height:1px;background:#c6c6c6"></div>
<div class="a gl" style="left:319px;top:424px;width:481px;height:1px"></div>
<div class="a" style="left:293px;top:424px;width:25px;height:1px;background:#c6c6c6"></div>
<div class="a gl" style="left:319px;top:472px;width:481px;height:1px"></div>
<div class="a" style="left:293px;top:472px;width:25px;height:1px;background:#c6c6c6"></div>
<div class="a gl" style="left:319px;top:492px;width:481px;height:1px"></div>
<div class="a" style="left:293px;top:492px;width:25px;height:1px;background:#c6c6c6"></div>
<div class="a gl" style="left:319px;top:512px;width:481px;height:1px"></div>
<div class="a" style="left:293px;top:512px;width:25px;height:1px;background:#c6c6c6"></div>
<div class="a gl" style="left:319px;top:532px;width:481px;height:1px"></div>
<div class="a" style="left:293px;top:532px;width:25px;height:1px;background:#c6c6c6"></div>
<div class="a gl" style="left:319px;top:552px;width:481px;height:1px"></div>
<div class="a" style="left:293px;top:552px;width:25px;height:1px;background:#c6c6c6"></div>
<div class="a gl" style="left:319px;top:572px;width:481px;height:1px"></div>
<div class="a" style="left:293px;top:572px;width:25px;height:1px;background:#c6c6c6"></div>
<div class="a gl" style="left:319px;top:592px;width:481px;height:1px"></div>
<div class="a" style="left:293px;top:592px;width:25px;height:1px;background:#c6c6c6"></div>
<div class="a gl" style="left:319px;top:612px;width:481px;height:1px"></div>
<div class="a" style="left:293px;top:612px;width:25px;height:1px;background:#c6c6c6"></div>
<div class="a gl" style="left:319px;top:632px;width:481px;height:1px"></div>
<div class="a" style="left:293px;top:632px;width:25px;height:1px;background:#c6c6c6"></div>
<div class="t c" style="left:340.5px;width:20px;top:369px;font-size:12.5px;color:#2a2a2a">A</div>
<div class="t c" style="left:404px;width:20px;top:369px;font-size:12.5px;color:#217346">B</div>
<div class="t c" style="left:509.5px;width:20px;top:369px;font-size:12.5px;color:#2a2a2a">C</div>
<div class="t c" style="left:637px;width:20px;top:369px;font-size:12.5px;color:#2a2a2a">D</div>
<div class="t c" style="left:744px;width:20px;top:369px;font-size:12.5px;color:#2a2a2a">E</div>
<div class="t c" style="left:293px;width:25px;top:389px;font-size:13px;color:#2a2a2a">1</div>
<div class="t c" style="left:293px;width:25px;top:409px;font-size:13px;color:#2a2a2a">2</div>
<div class="t c" style="left:293px;width:25px;top:457px;font-size:13px;color:#2a2a2a">3</div>
<div class="t c" style="left:293px;width:25px;top:477px;font-size:13px;color:#217346">4</div>
<div class="t c" style="left:293px;width:25px;top:497px;font-size:13px;color:#217346">5</div>
<div class="t c" style="left:293px;width:25px;top:517px;font-size:13px;color:#217346">6</div>
<div class="t c" style="left:293px;width:25px;top:537px;font-size:13px;color:#2a2a2a">7</div>
<div class="t c" style="left:293px;width:25px;top:557px;font-size:13px;color:#2a2a2a">8</div>
<div class="t c" style="left:293px;width:25px;top:577px;font-size:13px;color:#2a2a2a">9</div>
<div class="t c" style="left:293px;width:25px;top:597px;font-size:13px;color:#2a2a2a">10</div>
<div class="t c" style="left:293px;width:25px;top:617px;font-size:13px;color:#2a2a2a">11</div>
<div class="a" style="left:384px;top:493px;width:61px;height:38px;background:#c8c8c8"></div>
<div class="a" style="left:384px;top:512px;width:61px;height:1px;background:#a9a9a9"></div>
<div class="t" id="c1" style="left:385px;top:477px;font-size:12.5px;color:#000;transform:scaleX(1.022);transform-origin:0 0">&lt;CH184_Level&gt;</div>
<div class="t" id="c2" style="left:385px;top:517px;font-size:12.5px;color:#000;transform:scaleX(1.048);transform-origin:0 0">&lt;/CH184_Level&gt;</div>
<div class="a" style="left:381px;top:471px;width:67px;height:63px;border:2px solid #217346"></div>
<div class="a" style="left:444px;top:530px;width:6px;height:6px;background:#217346;border:1px solid #fff"></div>
<div class="a" style="left:318px;top:366px;width:1px;height:19px;background:#b4b4b4"></div>
<!-- SHEET TABS -->
<svg class="a" style="left:319px;top:645px" width="6" height="8" viewBox="0 0 6 8"><path d="M5 0.500v7l-4.500-3.500z" fill="#c0c0c0"/></svg>
<svg class="a" style="left:347px;top:645px" width="6" height="8" viewBox="0 0 6 8"><path d="M1 0.500v7l4.500-3.500z" fill="#c0c0c0"/></svg>
<div class="a" style="left:393px;top:636px;width:65px;height:25px;background:#fff;border-left:1px solid #c6c6c6;border-right:1px solid #c6c6c6;border-bottom:2px solid #217346"></div>
<div class="t" id="sh" style="left:405px;top:643px;font-size:13px;font-weight:bold;color:#217346;transform:scaleX(0.943);transform-origin:0 0">Sheet1</div>
<svg class="a" style="left:490px;top:640px" width="18" height="18" viewBox="0 0 18 18"><circle cx="9" cy="9" r="7.800" fill="none" stroke="#6a6a6a" stroke-width="1.200"/><path d="M9 5v8M5 9h8" stroke="#6a6a6a" stroke-width="1.400"/></svg>
<div class="a" style="left:736px;top:645px;width:2px;height:2px;background:#a8a8a8"></div>
<div class="a" style="left:736px;top:649px;width:2px;height:2px;background:#a8a8a8"></div>
<div class="a" style="left:736px;top:653px;width:2px;height:2px;background:#a8a8a8"></div>
<div class="a" style="left:753px;top:643px;width:50px;height:15px;background:#fff;border:1px solid #ababab"></div>
<div class="a" style="left:753px;top:643px;width:15px;height:15px;background:#fff;border:1px solid #ababab;border-right:2px solid #ababab"></div>
<svg class="a" style="left:758px;top:647px" width="5" height="7" viewBox="0 0 5 7"><path d="M4.300 0.200v6.600l-4-3.300z" fill="#5a5a5a"/></svg>
</body></html>
